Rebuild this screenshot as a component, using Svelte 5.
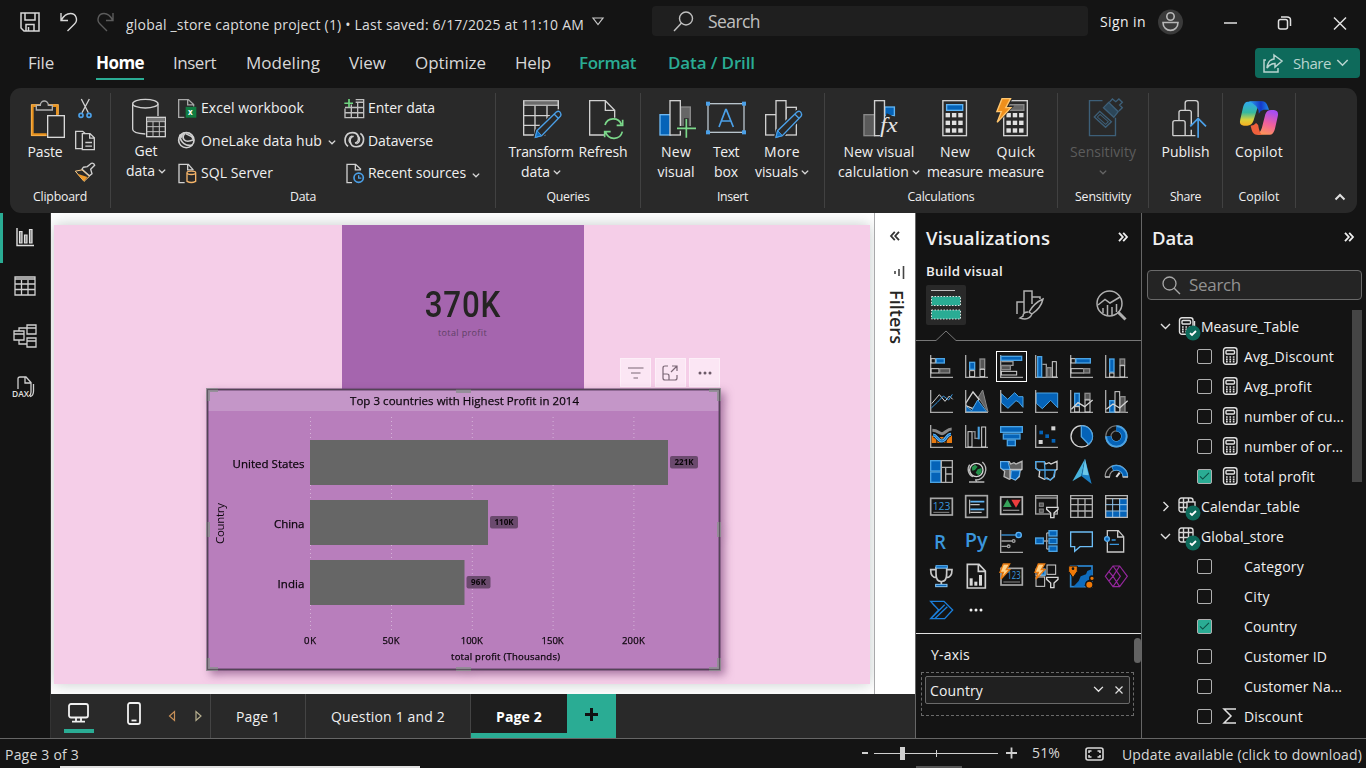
<script>
  // Letter-spaces a label so that it takes exactly the given width.
  function fit(node, width) {
    const n = node.textContent.length;
    node.style.letterSpacing = '0px';
    const natural = node.getBoundingClientRect().width;
    node.style.letterSpacing = (width - natural) / n + 'px';
  }

  const r = (x, y, w, h, f, s, sw = 4) =>
    `<rect x="${x}" y="${y}" width="${w}" height="${h}" fill="${f}" stroke="${s}" stroke-width="${sw}"/>`;
  const p = (d, s = '#d0d0d0', sw = 4, f = 'none') =>
    `<path d="${d}" stroke="${s}" stroke-width="${sw}" fill="${f}"/>`;
  const c = (x, y, rad, f, s = 'none', sw = 4) =>
    `<circle cx="${x}" cy="${y}" r="${rad}" fill="${f}" stroke="${s}" stroke-width="${sw}"/>`;
  const B = (x, y, w, h) => r(x, y, w, h, '#0563b8', '#4ba3e3');
  const G = (x, y, w, h) => r(x, y, w, h, '#555', '#8a8a8a');
  const W = (x, y, w, h) => r(x, y, w, h, 'none', '#d4d4d4', 3);
  const axis = p('M2 0V67H69', '#a8a8a8');
  const bolt = 'M10 -3H29L19 14H29L3 42L10 22H0Z';
  const txt = (x, y, size, t, len, fill = '#3a96dd', weight = 400) =>
    `<text x="${x}" y="${y}" font-family="Open Sans, sans-serif" font-weight="${weight}" font-size="${size}" textLength="${len}" lengthAdjust="spacingAndGlyphs" fill="${fill}">${t}</text>`;
  const funnel = p('M35 37H69V43L57 54V68H47V54L35 43Z', '#d8d8d8', 4, '#141414');
  const boltIcon = p(bolt, '#e87a10', 4, '#ffd28a');
  const map = 'M2 5H28L32 12L42 8L48 12L66 4V28L60 32L58 50L46 60L36 54L28 58L12 50L14 34L2 24Z';

  const visuals = [
    axis + W(3, 11, 13, 13) + B(19, 11, 24, 13) + W(3, 41, 24, 13) + G(29, 41, 30, 13),
    axis + B(14, 22, 15, 21) + W(14, 47, 15, 18) + G(45, 12, 14, 29) + W(45, 43, 14, 22),
    axis + B(3, 4, 62, 12) + p('M4 20H39V31H4', '#9a9a9a') + G(4, 32, 27, 12) + W(4, 49, 46, 11),
    axis + B(8, 5, 12, 61) + p('M22 28H34V66', '#9a9a9a') + G(36, 38, 12, 28) + W(52, 20, 12, 46),
    axis + W(3, 11, 13, 13) + B(18, 11, 43, 13) + W(3, 41, 38, 13) + G(41, 41, 18, 13),
    axis + B(14, 12, 13, 39) + W(14, 54, 13, 12) + G(45, 12, 14, 18) + W(45, 32, 14, 34),

    axis + p('M5 41L28 14L45 34L58 18L68 28', '#d4d4d4', 3) + p('M4 54L22 37L40 18L56 30L67 13', '#3a96dd', 3),
    p('M40 22L53 0L69 66Z', '#888', 3, '#606060') + p('M2 40L24 6L42 28L24 56L2 47Z', '#d4d4d4') + p('M2 48L20 62L38 30L65 65H2Z', '#4ba3e3', 3, '#0563b8') + axis,
    p('M4 11L23 28L44 8L56 20H69V52L56 36L48 32L24 55L4 38Z', '#4ba3e3', 3, '#0563b8') + axis,
    p('M4 9H68V53L47 31L22 56L4 40Z', '#4ba3e3', 3, '#0563b8') + axis,
    axis + B(14, 10, 14, 38) + W(14, 50, 14, 16) + G(45, 10, 15, 18) + W(45, 30, 15, 36) + p('M4 58L24 38L44 50L68 30', '#d4d4d4'),
    axis + B(14, 32, 14, 34) + W(30, 5, 14, 61) + G(46, 20, 14, 46) + p('M4 58L24 42L44 54L68 32', '#d4d4d4'),

    axis + r(5, 32, 14, 22, '#e87a10', '#e87a10', 0) + r(50, 32, 16, 22, '#e87a10', '#e87a10', 0) + r(24, 38, 20, 14, '#ffd28a', '#e87a10') + p('M7 16C24 16 28 26 36 26S52 12 65 12', '#888', 9) + p('M9 30C20 30 24 48 36 48S48 28 63 28', '#111', 13) + p('M9 30C20 30 24 48 36 48S48 28 63 28', '#5fb4f4', 9) + p('M9 30C20 30 24 48 36 48S48 28 63 28', '#0563b8', 3),
    axis + W(9, 20, 12, 46) + p('M21 20H30V40H40', '#8a8a8a') + r(39, 6, 4, 36, '#4ba3e3', '#4ba3e3', 2) + W(50, 6, 12, 60),
    B(2, 5, 65, 17) + B(10, 27, 50, 15) + B(22, 45, 24, 17),
    axis + r(13, 17, 11, 11, '#0563b8', 'none', 0) + r(31, 28, 11, 11, '#0563b8', 'none', 0) + r(50, 42, 11, 11, '#0563b8', 'none', 0) + r(49, 4, 12, 12, '#d4d4d4', 'none', 0) + r(11, 45, 12, 12, '#d4d4d4', 'none', 0),
    c(35, 34, 32, 'none', '#d4d4d4') + p('M34 3A31 31 0 0 1 56 58L34 35Z', '#4ba3e3', 4, '#0563b8'),
    c(34, 34, 24, 'none', '#777', 19) + c(34, 34, 24, 'none', '#141414', 12) + p('M34 10A24 24 0 1 1 10 34', '#4ba3e3', 19) + p('M34 12A22 22 0 1 1 12 34', '#0563b8', 12),

    B(2, 2, 31, 31) + B(2, 36, 31, 31) + p('M34 2H67V67H34ZM34 22H67M47 22V67M47 42H67', '#b0b0b0'),
    c(34, 30, 20, '#141414', '#d4d4d4') + p('M20 22L30 14L38 20L30 30L22 32ZM38 28L50 24L50 38L40 46L32 38Z', 'none', 0, '#23914a') + p('M52 6A31 31 0 0 1 30 60M34 60V66M12 66H58M14 14A24 24 0 0 0 24 50', '#b8b8b8'),
    p(map, '#b8b8b8', 4, '#606060') + p('M2 5H24L30 28H8L2 22Z', '#5fb4f4', 3, '#0563b8') + p('M34 32H60L57 48L46 60L32 54Z', '#5fb4f4', 3, '#0563b8') + p('M30 28H66M30 28V56', '#d4d4d4', 3),
    p(map, '#d4d4d4', 4) + p('M2 5H28L30 30H10L2 24ZM30 30H60L56 50L46 60L30 54Z', '#4ba3e3', 4),
    p('M45 -4L7 64L34 48Z', 'none', 0, '#48b3dc') + p('M45 -4L65 72L34 48Z', 'none', 0, '#1b7fc4') + p('M45 -4L56 46L38 44Z', 'none', 0, '#6cc8ea'),
    p('M7 50A27 27 0 0 1 61 50', '#999', 17) + p('M7 50A27 27 0 0 1 61 50', '#141414', 10) + p('M22 26A27 27 0 0 1 61 50', '#4ba3e3', 17) + p('M24 26A27 27 0 0 1 61 50', '#0563b8', 11) + p('M0 51H15M53 51H69', '#c8c8c8') + p('M34 51L44 38', '#e0e0e0', 6),

    r(2, 10, 65, 50, 'none', '#a8a8a8', 5) + txt(8, 44, 32, '123', 53) + p('M10 52H58', '#888', 3),
    r(2, 2, 65, 65, 'none', '#a8a8a8', 5) + p('M14 14V56', '#d4d4d4', 3) + p('M16 20H58M16 43H58', '#5fb4f4', 5) + p('M16 29H44M16 52H50', '#c0c0c0', 4),
    r(2, 6, 65, 52, 'none', '#b8b8b8', 5) + p('M9 36L22 13L35 36Z', 'none', 0, '#37a35a') + p('M34 14H62L48 38Z', 'none', 0, '#ee3d3d') + p('M9 46H58', '#888', 4),
    r(2, 2, 65, 55, 'none', '#a8a8a8', 4) + p('M2 9H67', '#a8a8a8', 4) + r(13, 24, 12, 10, '#555', '#888', 3) + r(13, 42, 12, 10, '#555', '#888', 3) + funnel,
    p('M2 2H67V67H2ZM2 11H67M2 29H67M2 48H67M24 11V67M45 11V67', '#b0b0b0', 4),
    r(2, 11, 65, 56, '#0563b8', 'none', 0) + r(2, 11, 40, 38, '#141414', 'none', 0) + p('M2 2H67V67H2ZM2 11H67', '#b8b8b8') + p('M2 29H67M2 48H67M23 11V67M44 11V67', '#8fc4ee', 3),

    txt(12, 56, 60, 'R', 36, '#3a96dd', 600),
    txt(-1, 52, 60, 'Py', 69, '#3a96dd', 600),
    p('M2 0V67H69', '#a8a8a8') + p('M4 15H48', '#3a96dd') + c(56, 15, 8, '#0563b8', '#5fb4f4') + p('M4 33H36M4 49H22', '#a0a0a0') + c(41, 33, 4, 'none', '#a0a0a0') + c(26, 49, 4, 'none', '#a0a0a0'),
    p('M24 33H40M35 9V57M35 9H42M35 57H42', '#a0a0a0', 4) + B(2, 24, 23, 17) + B(42, 2, 24, 16) + B(42, 25, 24, 16) + B(42, 48, 24, 16),
    p('M2 6H67V50H30L14 64V50H2Z', '#6cbcf4', 4),
    p('M7 18V2H40L56 20V66H7V36M38 2V21H56', '#c8c8c8') + c(6, 27, 7, '#0563b8', '#5fb4f4') + p('M20 30H32M14 43H42', '#3a96dd'),

    p('M18 8H50V25C50 48 42 48 34 50C26 48 18 48 18 25ZM18 14H2C2 30 8 38 20 38M50 14H66C66 30 60 38 48 38M34 50V58', '#c8c8c8', 5) + r(18, 2, 34, 7, '#0563b8', '#5fb4f4', 3) + r(17, 58, 34, 7, '#0563b8', '#8cc8f4', 3),
    p('M7 -2H42L61 18V69H7ZM40 0V19H60', '#d0d0d0', 5) + r(14, 40, 9, 22, '#d8d8d8', 'none', 0) + r(28, 50, 9, 12, '#d8d8d8', 'none', 0) + r(42, 30, 9, 32, '#d8d8d8', 'none', 0),
    r(3, 10, 64, 50, 'none', '#a8a8a8', 5) + txt(22, 43, 30, '123', 40) + p('M10 51H60', '#888', 3) + boltIcon,
    W(3, 12, 27, 20) + W(36, 0, 26, 28) + W(3, 36, 26, 28) + r(20, 14, 10, 16, '#0563b8', '#4ba3e3') + funnel + boltIcon,
    r(2, 3, 64, 62, '#141414', '#2b86d1', 5) + p('M66 12L52 18L48 28L32 34L26 48L10 65H42L48 50L66 38Z', 'none', 0, '#0f6cbd') + p('M-4 3H22V19L9 38L-4 19Z', '#141414', 3, '#f07a08') + c(9, 11, 4, '#141414') + c(58, 59, 11, '#f07a08', '#141414') + c(66, 40, 7, '#f07a08', '#141414'),
    p('M24 3H44L67 34L44 65H24L1 34ZM24 3L46 34L24 65M44 3L24 34L44 65M12 20L24 34L12 48', '#94279c', 3.5),
    p('M2 4H42L68 30L44 56H2L26 30Z M2 56L44 14M14 56L52 20M2 4L14 18', '#1b7fdb', 4),
  ];

  // name: [view box x, y, width, height, rendered width, rendered height, body]
  const pencil = (x, y) =>
    p(`M${x} ${y}L${x + 5} ${y - 20}L${x + 63} ${y - 76}Q${x + 72} ${y - 82} ${x + 76} ${y - 72}Q${x + 79} ${y - 66} ${x + 73} ${y - 61}L${x + 19} ${y - 5}Z`, '#292929', 12) +
    p(`M${x} ${y}L${x + 5} ${y - 20}L${x + 63} ${y - 76}Q${x + 72} ${y - 82} ${x + 76} ${y - 72}Q${x + 79} ${y - 66} ${x + 73} ${y - 61}L${x + 19} ${y - 5}Z`, '#4ba0e8', 4, '#292929') +
    p(`M${x} ${y}L${x + 5} ${y - 20}L${x + 19} ${y - 5}Z`, '#4ba0e8', 3, '#0f6cbd') + p(`M${x + 56} ${y - 70}L${x + 69} ${y - 57}`, '#4ba0e8', 4);
  const dots = (x, y, dx, dy, s) =>
    [0, 1, 2].flatMap((i) => [0, 1, 2].map((j) => r(x + j * dx, y + i * dy, s, s, '#e0e0e0', 'none', 0))).join('');
  const z1 = (x, body) => [x, 291, 120, 126, 40, 42, body];
  const z2 = (x, body) => [x, 36, 120, 126, 40, 42, body];
  const z4 = (x, body) => [x, 36, 117, 126, 40, 42, body];
  const icons = {
    paste: z1(75, p('M140 404H97V317H172V345', '#e8921e', 8) + p('M140 407H94V314H175V343', '#ffc26a', 2) + p('M109 330V316H121C121 307 128 303 133 303S145 307 145 316H157V330Z', '#b0b0b0', 4, '#292929') + r(143, 347, 50, 65, '#292929', '#d8d8d8', 4)),
    get: z1(378, p('M436 402C410 401 398 396 398 388V311M474 311V348') + `<ellipse cx="436" cy="311" rx="38" ry="13" stroke="#d0d0d0" stroke-width="4" fill="#292929"/>` + r(440, 352, 56, 58, '#292929', '#d0d0d0') + r(442, 354, 52, 9, '#777', 'none', 0) + p('M440 365H496M440 380H496M440 395H496M459 365V410M478 365V410', '#c0c0c0', 3)),
    transform: z2(213, r(221, 47, 104, 14, '#6a6a6a', '#b0b0b0') + p('M286 150H221V47M325 47V75M221 92H308M221 121H270M255 62V150M291 62V108') + pencil(256, 157)),
    refresh: z2(399, p('M462 150H419V47H466L494 76V98M466 47V76H494') + p('M465 120A26 26 0 0 1 514 118M518 104V121H500M517 140A26 26 0 0 1 467 142M464 157V140H482', '#7bd88a', 5)),
    newvisual: z2(618, r(630, 89, 32, 61, '#0563b8', '#6cb8f4') + r(692, 66, 29, 60, '#666', '#888') + r(660, 47, 31, 103, '#292929', '#d0d0d0') + p('M709 100V160M680 130H740', '#292929', 14) + p('M709 102V158M681 130H738', '#7bd88a', 5)),
    textbox: z2(768, r(774, 56, 108, 86, 'none', '#b8c4cc') + [[768, 50], [876, 50], [768, 136], [876, 136]].map(([x, y]) => r(x, y, 12, 12, '#4ba0e8', 'none', 0)).join('') + p('M807 126L827 74H829L850 126M813 108H843', '#4ba0e8', 5)),
    more: z2(936, r(947, 89, 32, 61, '#292929', '#d0d0d0') + r(1008, 67, 31, 83, '#292929', '#d0d0d0') + r(978, 47, 30, 103, '#292929', '#d0d0d0') + pencil(978, 157)),
    calc: z4(84.5, r(99, 89, 31, 63, '#5a5a5a', '#888') + r(160, 66, 28, 26, '#0563b8', '#5fb4f4') + r(130, 47, 29, 105, '#292929', '#d0d0d0') + p('M150 152L168 90L200 105V150Z', '#292929', 8, '#292929') + `<text x="146" y="142" font-family="Liberation Serif, serif" font-style="italic" font-size="62" textLength="52" lengthAdjust="spacingAndGlyphs" fill="#e4e4e4">fx</text>`),
    measure: z4(307, r(330, 47, 69, 105, 'none', '#d0d0d0') + r(341, 59, 47, 17, '#0563b8', '#5fb4f4') + dots(338, 84, 18.5, 23, 13)),
    quick: z4(485.5, r(508, 47, 69, 105, 'none', '#d0d0d0') + r(524, 59, 43, 17, '#666', '#888') + dots(516, 84, 18.5, 23, 13) + p('M503 40H530L517 66H530L489 112L501 80H488Z', '#292929', 8) + p('M503 41H528L514 68H529L489 112L501 80H488Z', '#ffc66e', 4, '#ee8f1c')),
    sensitivity: z4(740, p('M797 47H759V152H835V98', '#3d5f78') + p('M773 96L789 79L823 110L806 127Z', '#3d5f78') + p('M782 96L790 88L814 110L806 118Z', '#3d5f78', 3) + p('M800 68L830 97L843 80L815 52Z', '#3d5f78', 4, '#2c4658') + p('M817 52L826 42L836 50L845 42L855 52L847 60L855 68L845 78', '#3d5f78', 4)),
    publish: z4(980, p('M1000 152V113Q1000 107 1006 107H1018V82Q1018 76 1024 76H1036V55Q1036 47 1044 47H1066Q1074 47 1074 55V96M1018 107H1030Q1036 107 1036 113V152M1036 76H1048Q1054 76 1054 82V120M1000 152H1066M1054 134V152') + p('M1074 158V102M1051 124L1074 100L1097 124', '#4ba0e8', 5)),
    copilot: z4(1196, `<defs><linearGradient id="ca" x1="0" y1="0" x2="0" y2="1"><stop offset="0" stop-color="#2fa8f0"/><stop offset=".45" stop-color="#36b8a0"/><stop offset=".75" stop-color="#d8d03c"/><stop offset="1" stop-color="#f8b020"/></linearGradient><linearGradient id="cb" x1="0.5" y1="0" x2="0.2" y2="1"><stop offset="0" stop-color="#a64df0"/><stop offset=".5" stop-color="#f0609c"/><stop offset="1" stop-color="#ff9a52"/></linearGradient><linearGradient id="cc" x1="0" x2="1"><stop offset="0" stop-color="#2ea8f4"/><stop offset=".6" stop-color="#1438c8"/><stop offset="1" stop-color="#2088e8"/></linearGradient></defs><path d="M1222 50H1264Q1254 55 1249 72L1238 108Q1233 122 1220 122H1210Q1195 121 1200 102L1208 66Q1212 50 1222 50Z" fill="url(#ca)"/><path d="M1224 49H1266Q1276 50 1280 64L1284 74H1268Q1258 76 1254 86Q1254 60 1224 49Z" fill="url(#cc)"/><path d="M1288 149H1248Q1258 144 1263 128L1273 88Q1277 75 1290 75H1298Q1314 77 1309 96L1301 132Q1297 148 1288 149Z" fill="url(#cb)"/><path d="M1285 149H1246Q1237 148 1233 134L1230 122Q1240 122 1246 114L1252 120Q1256 146 1264 149Z" fill="#f0603c"/>`),
    cut: [225, 293, 60, 64, 20, 21, p('M244 296L265 338M268 296L246 338') + c(243, 346, 6, 'none', '#4ba0e8', 5) + c(267, 346, 6, 'none', '#4ba0e8', 5)],
    copy: [225, 388, 60, 64, 20, 21, p('M246 445H227V392H248L255 398') + p('M247 399H270L283 412V448H247ZM269 399V413H283M256 426H276M256 437H276')],
    brush: [225, 486, 60, 64, 20, 21, p('M250 502L262 500L274 490Q282 488 284 496L272 508L276 522L268 528L246 508Z', '#d0d0d0', 4) + p('M226 514L246 510L268 530L252 545Z', '#ffd08a', 3, '#292929') + p('M232 522L262 532L252 545Z', 'none', 0, '#f09a28')],
    excel: [530, 292, 60, 64, 20, 21, p('M552 351H535V297H564L580 312V318M562 297V313H580', '#a8a8a8') + r(556, 319, 32, 33, '#107c41', 'none', 0) + `<text x="563" y="345" font-family="Open Sans, sans-serif" font-weight="700" font-size="24" fill="#fff">x</text>`],
    onelake: [530, 390, 60, 64, 20, 21, c(558, 421, 23, 'none', '#d0d0d0', 5) + p('M554 400C542 414 550 432 580 420M538 408C542 430 556 440 576 436M556 401L574 410L580 420', '#d0d0d0', 5) + p('M536 406L550 398L544 414Z', '#d0d0d0', 2, '#d0d0d0')],
    sql: [530, 487, 60, 64, 20, 21, p('M553 547H536V491H564L578 507M562 491V508H580') + `<path d="M560 518V543Q573 550 586 543V518" stroke="#f5b469" stroke-width="4" fill="#292929"/><ellipse cx="573" cy="517" rx="13" ry="5" stroke="#f5b469" stroke-width="4" fill="#292929"/>`],
    enter: [1031, 292, 60, 64, 20, 21, p('M1066 297H1090V352H1034V324M1066 305H1090M1034 321H1090M1034 337H1090M1053 312V352M1072 306V352', '#c0c0c0') + p('M1046 295V320M1032 308H1058', '#6fd680', 5)],
    dataverse: [1031, 390, 60, 64, 20, 21, p('M1043 440C1028 428 1032 398 1056 398C1078 398 1080 426 1064 430M1080 400C1096 412 1092 441 1068 441C1046 441 1044 412 1060 409', '#d0d0d0', 5) + p('M1052 431C1042 424 1046 410 1056 408M1072 408C1082 415 1078 430 1068 432', '#d0d0d0', 4)],
    recent: [1031, 487, 60, 64, 20, 21, p('M1055 547H1040V491H1066L1082 507M1065 491V508H1082') + c(1075, 532, 14, '#292929', '#4ba0e8', 5) + p('M1075 524V533H1083', '#4ba0e8')],
  };

  const groups = [
    { label: 'Queries', lw: 43, w: 145, pad: 8, buttons: [
      { icon: 'transform', w: 74, l: [['Transform', 65], ['data', 29]], more: true },
      { icon: 'refresh', w: 50, l: [['Refresh', 49]] }] },
    { label: 'Insert', lw: 31, w: 184, pad: 9, buttons: [
      { icon: 'newvisual', w: 52, l: [['New', 30], ['visual', 37]] },
      { icon: 'textbox', w: 48, l: [['Text', 26], ['box', 24]] },
      { icon: 'more', w: 64, l: [['More', 36], ['visuals', 43]], more: true }] },
    { label: 'Calculations', lw: 67, w: 233, pad: 13, buttons: [
      { icon: 'calc', w: 82, l: [['New visual', 71], ['calculation', 71]], more: true },
      { icon: 'measure', w: 70, l: [['New', 30], ['measure', 56]] },
      { icon: 'quick', w: 52, l: [['Quick', 39], ['measure', 56]] }] },
    { label: 'Sensitivity', lw: 56, w: 91, pad: 0, buttons: [
      { icon: 'sensitivity', w: 90, l: [['Sensitivity', 66], ['', 0]], more: true, off: true }] },
    { label: 'Share', lw: 31, w: 74, pad: 0, buttons: [{ icon: 'publish', w: 73, l: [['Publish', 48]] }] },
    { label: 'Copilot', lw: 41, w: 73, pad: 0, buttons: [{ icon: 'copilot', w: 72, l: [['Copilot', 48]] }] },
  ];
  const sources = [
    [['excel', 'Excel workbook', 103], ['onelake', 'OneLake data hub', 121, true], ['sql', 'SQL Server', 72]],
    [['enter', 'Enter data', 67], ['dataverse', 'Dataverse', 65], ['recent', 'Recent sources', 98, true]],
  ];
  const menu = [['File', 26, 28], ['Home', 48, 96], ['Insert', 43, 173], ['Modeling', 74, 246], ['View', 37, 349], ['Optimize', 71, 415], ['Help', 36, 515], ['Format', 57, 579], ['Data / Drill', 87, 668]];
  const gapBefore = (i) => menu[i][2] - (i ? menu[i - 1][2] + menu[i - 1][1] : 0);

  const tree = [
    { t: 'Measure_Table', w: 98, open: true, kind: 'calcs' },
    { t: 'Avg_Discount', w: 90, leaf: true, kind: 'calc' },
    { t: 'Avg_profit', w: 68, leaf: true, kind: 'calc' },
    { t: 'number of cu...', w: 100, leaf: true, kind: 'calc' },
    { t: 'number of or...', w: 99, leaf: true, kind: 'calc' },
    { t: 'total profit', w: 71, leaf: true, kind: 'calc', on: true },
    { t: 'Calendar_table', w: 99, kind: 'table' },
    { t: 'Global_store', w: 83, open: true, kind: 'table' },
    { t: 'Category', w: 60, leaf: true },
    { t: 'City', w: 26, leaf: true },
    { t: 'Country', w: 53, leaf: true, on: true },
    { t: 'Customer ID', w: 83, leaf: true },
    { t: 'Customer Na...', w: 98, leaf: true },
    { t: 'Discount', w: 59, leaf: true, kind: 'sum' },
  ];
  const bars = [
    { name: 'United States', nw: 72, y: 51, w: 358, label: '221K', bw: 28 },
    { name: 'China', nw: 30.5, y: 111, w: 178, label: '110K', bw: 28 },
    { name: 'India', nw: 27, y: 171, w: 154.5, label: '96K', bw: 24 },
  ];
  const ticks = [['0K', 104, 12], ['50K', 185, 17], ['100K', 265.8, 22], ['150K', 346.6, 22], ['200K', 427.4, 23]];
</script>

{#snippet icon(name)}
  {@const i = icons[name]}
  <svg class="ic" width={i[4]} height={i[5]} viewBox="{i[0]} {i[1]} {i[2]} {i[3]}" preserveAspectRatio="none">{@html i[6]}</svg>
{/snippet}
{#snippet chev(w = 8, col = '#d8d8d8')}
  <svg class="ic" width={w} height={w * 0.6} viewBox="0 0 10 6"><path d="M1 .8L5 4.8L9 .8" fill="none" stroke={col} stroke-width={w > 8 ? 1.2 : 1.7} /></svg>
{/snippet}
{#snippet dbl(col)}
  <svg class="ic" width="10" height="10" viewBox="0 0 10 10"><path d="M1 .8L4.8 5L1 9.2M5.2 .8L9 5L5.2 9.2" fill="none" stroke={col} stroke-width="1.8" /></svg>
{/snippet}

<div class="app">
  <header class="title">
    <svg class="ic save" width="20" height="20" viewBox="0 0 20 20" fill="none" stroke="#d8d8d8" stroke-width="1.5"><path d="M1 1H19V19H4L1 16ZM5 1V8H15V1M6 19V12.500H14V19M8.500 15V19" /></svg>
    <svg class="ic undo" width="18" height="20" viewBox="0 0 18 20" fill="none" stroke="#d8d8d8" stroke-width="1.4"><path d="M1 1V8.500H8M1.500 8C4 3 7 1.500 10.500 1.500C16 1.500 18.500 8 14.500 12L7.500 19" /></svg>
    <svg class="ic redo" width="18" height="20" viewBox="0 0 18 20" fill="none" stroke="#5c5c5c" stroke-width="1.4"><path d="M16 1V8.500H9M15.500 8C13 3 10 1.500 7 1.500C1.500 1.500 -1 8 3 12L10 19" /></svg>
    <span class="doc" use:fit={458}>global _store captone project (1) • Last saved: 6/17/2025 at 11:10 AM</span>
    <svg class="ic tri" width="12" height="9" viewBox="0 0 12 9" fill="none" stroke="#c8c8c8" stroke-width="1.2"><path d="M1 1H11L6 7.500Z" /></svg>
    <div class="search">
      <svg class="ic" width="21" height="21" viewBox="0 0 21 21" fill="none" stroke="#c0c0c0" stroke-width="1.4"><circle cx="13" cy="7.500" r="6.500" /><path d="M8.500 12L1 20" /></svg>
      <span use:fit={52}>Search</span>
    </div>
    <span class="sign" use:fit={46}>Sign in</span>
    <svg class="ic" width="25" height="26" viewBox="0 0 25 26" fill="none" stroke="#b8b8b8" stroke-width="1.6"><circle cx="12.500" cy="13" r="12.500" fill="#3a3a3a" stroke="none" /><circle cx="12.500" cy="7.500" r="3.700" /><path d="M5 13.500H20C20 24 5 24 5 13.500Z" /></svg>
    <svg class="ic win" width="124" height="14" viewBox="0 0 124 14" fill="none" stroke="#e0e0e0" stroke-width="1.5"><path d="M1 7H14" /><rect x="55.500" y="3.500" width="9" height="9.500" rx="2" /><path d="M58 1H64Q67.500 1 67.500 4V10" /><path d="M111 1.500L123 13.500M123 1.500L111 13.500" /></svg>
  </header>

  <nav class="menu">
    {#each menu as m, i}
      <span class="tab" class:home={i === 1} class:ctx={i > 6} style:margin-left="{gapBefore(i)}px"><span use:fit={m[1]}>{m[0]}</span></span>
    {/each}
    <button class="share">
      <svg class="ic" width="20" height="19" viewBox="0 0 20 19" fill="none" stroke="#b8d4cf" stroke-width="1.500"><path d="M3 6H1V18H15V14M11 1L19 7L12 13V9.500C8 9.500 6 11 4 14C4.500 9 7 5.500 11 5Z" /></svg>
      <span use:fit={38}>Share</span>{@render chev(13, '#b8d4cf')}
    </button>
  </nav>

  <section class="ribbon">
    <div class="group clip">
      <div class="content">
        <div class="btn paste">{@render icon('paste')}<span class="l"><span use:fit={35}>Paste</span></span></div>
        <div class="mini">{@render icon('cut')}{@render icon('copy')}{@render icon('brush')}</div>
      </div>
      <span class="gl"><span use:fit={54}>Clipboard</span></span>
    </div>
    <div class="group data">
      <div class="content">
        <div class="btn get">{@render icon('get')}<span class="l"><span use:fit={23}>Get</span></span><span class="l"><span use:fit={29}>data</span>{@render chev()}</span></div>
        {#each sources as col, i}
          <div class="col" class:second={i === 1}>
            {#each col as s}
              <div class="src">{@render icon(s[0])}<span use:fit={s[2]}>{s[1]}</span>{#if s[3]}{@render chev()}{/if}</div>
            {/each}
          </div>
        {/each}
      </div>
      <span class="gl"><span use:fit={26}>Data</span></span>
    </div>
    {#each groups as g}
      <div class="group" style:width="{g.w}px">
        <div class="content" style:padding-left="{g.pad}px">
          {#each g.buttons as b}
            <div class="btn" class:off={b.off} style:width="{b.w}px">
              {@render icon(b.icon)}
              {#each b.l as line, i}
                <span class="l">{#if line[0]}<span use:fit={line[1]}>{line[0]}</span>{/if}{#if i === 1 && b.more}{@render chev(8, b.off ? '#666' : '#d8d8d8')}{/if}</span>
              {/each}
            </div>
          {/each}
        </div>
        <span class="gl"><span use:fit={g.lw}>{g.label}</span></span>
      </div>
    {/each}
    <svg class="ic collapse" width="12" height="8" viewBox="0 0 12 8"><path d="M1.500 6.500L6 2L10.500 6.500" fill="none" stroke="#e0e0e0" stroke-width="2" /></svg>
  </section>

  <main>
    <aside class="rail">
      <i class="mark"></i>
      <svg class="ic" width="20" height="20" viewBox="0 0 20 20" fill="none" stroke="#e0e0e0" stroke-width="1.400"><path d="M2 1V18.500H19" /><path d="M4.500 4.500H7V16H4.500ZM9.500 8H12V16H9.500ZM14.500 2.500H17V16H14.500Z" fill="#888" stroke-width="1.200" /></svg>
      <svg class="ic" width="22" height="20" viewBox="0 0 22 20" fill="none" stroke="#d0d0d0" stroke-width="1.300"><path d="M1 1H21V19H1ZM1 3H21M1 8H21M1 13.500H21M7.500 4V19M14 4V19" /></svg>
      <svg class="ic" width="24" height="24" viewBox="0 0 24 24" fill="none" stroke="#d0d0d0" stroke-width="1.300"><path d="M1 7H11V16H1ZM1 10H11M14 1H23V10H14ZM14 4H23M14 14H23V23H14ZM14 17H23M6 7V4H14M6 16V20H14" /></svg>
      <svg class="ic" width="24" height="22" viewBox="0 0 24 22" fill="none" stroke="#d0d0d0" stroke-width="1.300"><path d="M6 13V3Q6 1 8 1H14L19 6.500V16Q19 19 17 20M13 1V7H19M21.500 8V15Q21.500 20 18 20.500" /><text x="0" y="21" font-family="Open Sans" font-weight="600" font-size="8.500" textLength="17" lengthAdjust="spacingAndGlyphs" fill="#e0e0e0" stroke="none">DAX</text></svg>
    </aside>

    <div class="center">
      <div class="stage">
        <div class="page">
          <div class="card"><b use:fit={77}>370K</b><span use:fit={49}>total profit</span></div>
          <div class="tools">
            <span><svg class="ic" width="16" height="12" viewBox="0 0 16 12" stroke="#7a6675" stroke-width="1.200"><path d="M0 1H15.500M3 6H12.500M5.500 11H10" /></svg></span>
            <span><svg class="ic" width="16" height="16" viewBox="0 0 16 16" fill="none" stroke="#7a6675" stroke-width="1.200"><path d="M6 1H3Q1 1 1 3V13Q1 15 3 15H13Q15 15 15 13V10M1 9H5Q7 9 7 11V15M10 1H15V6M15 1L9 7" /></svg></span>
            <span><svg class="ic" width="14" height="4" viewBox="0 0 14 4" fill="#6c5a68"><circle cx="2" cy="2" r="1.500" /><circle cx="7" cy="2" r="1.500" /><circle cx="12" cy="2" r="1.500" /></svg></span>
          </div>
          <svg class="chart" width="515" height="283" viewBox="0 0 515 283">
            <rect x="1" y="1" width="513" height="281" fill="#b87ebc" />
            <rect x="1" y="2" width="513" height="21" fill="#c496c8" />
            <g class="grid">{#each ticks as t}<path d="M{t[1] + 0.5} 29V245" />{/each}</g>
            {#each bars as b}
              <rect x="104" y={b.y + 1} width={b.w} height="45" fill="#666" />
              <text class="cat" x="98.500" y={b.y + 29} text-anchor="end" textLength={b.nw}>{b.name}</text>
              <rect x={104 + b.w + 2} y={b.y + 17} width={b.bw} height="12.500" rx="2" fill="#6b4a6e" />
              <text class="val" x={104 + b.w + 2 + b.bw / 2} y={b.y + 26} text-anchor="middle" textLength={b.bw - 9}>{b.label}</text>
            {/each}
            {#each ticks as t}<text class="tick" x={t[1]} y="255.500" text-anchor="middle" textLength={t[2]}>{t[0]}</text>{/each}
            <text class="head" x="258.500" y="17" text-anchor="middle" textLength="229">Top 3 countries with Highest Profit in 2014</text>
            <text class="tick" x="299.500" y="272" text-anchor="middle" textLength="109">total profit (Thousands)</text>
            <text class="ylab" transform="translate(18 156) rotate(-90)" textLength="41">Country</text>
            <rect x="1.500" y="1.500" width="512" height="280" fill="none" stroke="#604266" stroke-width="2" />
            <g fill="none" stroke="#8e8e92" stroke-opacity=".85" stroke-width="4"><path d="M2 13V2H12M503 2H513V13M513 270V281H503M12 281H2V270M250 3H265M250 281H265M2 134V149M513 134V149" /></g>
            <rect x="1.500" y="1.500" width="512" height="280" fill="none" stroke="#4e4450" stroke-opacity=".7" />
          </svg>
        </div>
      </div>
      <div class="filters">
        <span class="flip">{@render dbl('#333')}</span>
        <svg class="ic" width="11" height="13" viewBox="0 0 11 13" stroke="#444" stroke-width="1.600"><path d="M1 5V8M5 3V10M9.500 0V13" /></svg>
        <svg class="ic ftxt" width="16" height="56" viewBox="0 0 16 56"><text transform="translate(2 0) rotate(90)" textLength="54" lengthAdjust="spacingAndGlyphs">Filters</text></svg>
      </div>
      <footer class="pages">
        <div class="views">
          <span class="view on"><svg class="ic" width="21" height="20" viewBox="0 0 21 20" fill="none" stroke="#f0f0f0" stroke-width="1.800"><rect x="1" y="1" width="19" height="13.500" rx="2" /><path d="M8 15V18M13 15V18M4 18.700H17" /></svg></span>
          <span class="view phone"><svg class="ic" width="14" height="23" viewBox="0 0 14 23" fill="none" stroke="#f0f0f0" stroke-width="1.800"><rect x="1" y="1" width="12" height="21" rx="2" /><path d="M4.500 18.500H9.500" /></svg></span>
          <svg class="ic arrows" width="34" height="12" viewBox="0 0 34 12" fill="none" stroke="#c89058" stroke-width="1.200"><path d="M6.500 1.500V10.500L1.500 6Z" /><path d="M28 1.500V10.500L33 6Z" stroke="#b8b090" /></svg>
        </div>
        <span class="pt p1"><span use:fit={44}>Page 1</span></span>
        <span class="pt p2"><span use:fit={114}>Question 1 and 2</span></span>
        <span class="pt p3"><span use:fit={46}>Page 2</span></span>
        <span class="add"><svg class="ic" width="13" height="13" viewBox="0 0 13 13" stroke="#111" stroke-width="3"><path d="M6.500 0V13M0 6.500H13" /></svg></span>
      </footer>
    </div>

    <aside class="viz">
      <div class="ph"><b use:fit={124}>Visualizations</b>{@render dbl('#f0f0f0')}</div>
      <b class="bv"><span use:fit={77}>Build visual</span></b>
      <div class="modes">
        <span class="mode sel"><svg class="ic" width="30" height="32" viewBox="0 0 30 32"><path d="M0 1.500H24" stroke="#c0c0c0" /><g fill="#2aac94" stroke="#e0e0e0" stroke-dasharray="1.500 1.500"><rect x=".5" y="7.500" width="29" height="9" /><rect x=".5" y="21" width="29" height="9" /></g></svg></span>
        <span class="mode"><svg class="ic" width="28" height="30" viewBox="0 0 28 30" fill="none" stroke="#b0b0b0" stroke-width="1.500"><path d="M1 24V12H8V24M8 20V1H16V14M16 7H24V9M27 9Q18 13 13 22L16 24Q25 18 27 9ZM12 22Q7 22 7 26L4 28Q13 31 16 24" /></svg></span>
        <span class="mode"><svg class="ic" width="31" height="31" viewBox="0 0 31 31" fill="none" stroke="#b0b0b0" stroke-width="1.500"><circle cx="13.500" cy="13.500" r="12.500" /><path d="M2 15L9 9.500L14 13L24 7M7 18V23M11.500 15V25M16 17V25M20.500 14V22" /><path d="M22 22L29.500 29.500" stroke-width="3" /></svg></span>
      </div>
      <svg class="ic notch" width="225" height="11" viewBox="0 0 225 11" fill="none" stroke="#777"><path d="M0 10.500H20L30 1L40 10.500H225" /></svg>
      <div class="grid6">
        {#each visuals as v, i}
          <span class="vi" class:cur={i === 2}><svg class="ic" width="23" height="23" viewBox="0 0 69 69">{@html v}</svg></span>
        {/each}
        <span class="vi"><svg class="ic" width="23" height="23" viewBox="0 0 23 23" fill="#f0f0f0"><circle cx="6" cy="10" r="1.500" /><circle cx="11" cy="10" r="1.500" /><circle cx="16" cy="10" r="1.500" /></svg></span>
      </div>
      <div class="wells">
        <i class="thumb"></i>
        <span class="wl"><span use:fit={39}>Y-axis</span></span>
        <div class="drop"><div class="field"><span use:fit={53}>Country</span>{@render chev(11, '#e8e8e8')}<svg class="ic" width="8" height="8" viewBox="0 0 8 8" stroke="#e0e0e0" stroke-width="1.200"><path d="M.5 .5L7.500 7.500M7.500 .5L.5 7.500" /></svg></div></div>
      </div>
    </aside>

    <aside class="fields">
      <div class="ph"><b use:fit={42}>Data</b>{@render dbl('#f0f0f0')}</div>
      <div class="fs">
        <svg class="ic" width="19" height="19" viewBox="0 0 19 19" fill="none" stroke="#a8a8a8" stroke-width="1.300"><circle cx="7.500" cy="7.500" r="6.500" /><path d="M12.200 12.200L18 18" /></svg>
        <span use:fit={52}>Search</span>
      </div>
      <div class="tree">
        {#each tree as n}
          <div class="row" class:leaf={n.leaf}>
            {#if n.leaf}
              <i class="cb" class:on={n.on}>{#if n.on}<svg class="ic" width="11" height="8" viewBox="0 0 12 9"><path d="M1 5L4 8L11 1" fill="none" stroke="#0c4f44" stroke-width="1.200" /></svg>{/if}</i>
            {:else}
              <svg class="ic ex" width="11" height="11" viewBox="0 0 11 11" fill="none" stroke="#e0e0e0" stroke-width="1.400"><path d={n.open ? 'M1 3L5.500 7.500L10 3' : 'M3.500 1L8 5.500L3.500 10'} /></svg>
            {/if}
            <span class="kind">
              {#if n.kind === 'calc' || n.kind === 'calcs'}
                <svg class="ic" width="18" height="18" viewBox="0 0 18 18" fill="none" stroke="#e0e0e0" stroke-width="1.400"><rect x="1.500" y=".7" width="13.500" height="16.500" rx="2.500" /><rect x="4" y="3.500" width="8.500" height="3.500" rx="1" /><path d="M4 10H12.500M4 12.300H12.500M4 14.600H12.500" stroke-width="1.700" stroke-dasharray="1.700 1.700" />{#if n.kind === 'calcs'}<path d="M16.500 4V16Q16 18 13 18" />{/if}</svg>
              {:else if n.kind === 'table'}
                <svg class="ic" width="18" height="18" viewBox="0 0 18 18" fill="none" stroke="#d8d8d8" stroke-width="1.400"><rect x="1" y="1" width="14" height="14" rx="2.500" /><path d="M1 5.500H15M1 10.500H15M5.500 1V15M10.500 1V15" />{#if !n.open}<rect x="9" y="5" width="8" height="7" fill="#141414" />{/if}</svg>
              {:else if n.kind === 'sum'}
                <svg class="ic" width="15" height="16" viewBox="0 0 15 16" fill="none" stroke="#e0e0e0" stroke-width="1.500"><path d="M14 1H2L9 8L2 15H14" /></svg>
              {/if}
              {#if !n.leaf}<svg class="ic badge" width="16" height="16" viewBox="0 0 16 16"><circle cx="8" cy="8" r="7.500" fill="#0e6a5b" /><path d="M5 8.200L7 10L11 6" fill="none" stroke="#fff" stroke-width="1.800" /></svg>{/if}
            </span>
            <span class="tx" use:fit={n.w}>{n.t}</span>
          </div>
        {/each}
        <i class="sb"></i>
      </div>
    </aside>
  </main>

  <footer class="status">
    <span class="pg" use:fit={74}>Page 3 of 3</span>
    <svg class="ic zoom" width="156" height="16" viewBox="0 0 156 16" stroke="#d0d0d0" fill="none"><path d="M1 8H7M145 8H156M150.500 2.500V13.500" stroke-width="1.800" /><path d="M13 8.500H137M75.500 5V12" stroke-width="1" /><rect x="39" y="2" width="5" height="13" fill="#d0d0d0" stroke="none" /></svg>
    <span class="pct" use:fit={28}>51%</span>
    <svg class="ic" width="19" height="14" viewBox="0 0 19 14" fill="none" stroke="#d8d8d8" stroke-width="1.600"><rect x="1" y="1" width="17" height="12" rx="2" /><path d="M4 6V4H6.500M12.500 4H15V6M15 8V10H12.500M6.500 10H4V8" /></svg>
    <span class="upd" use:fit={240}>Update available (click to download)</span>
    <i class="edge"></i><i class="edge two"></i>
  </footer>
</div>

<style>
  :global(body) { background: #141414; overflow: hidden; }
  .app { width: 1366px; height: 768px; display: flex; flex-direction: column; background: #141414; color: #f0f0f0; font-family: "Open Sans", "Noto Sans", sans-serif; font-size: 14px; line-height: 20px; overflow: hidden; }
  .app *, .app { box-sizing: border-box; }
  span { white-space: nowrap; flex: none; }
  .ic { display: block; flex: none; overflow: visible; }
  .title { height: 44px; display: flex; align-items: center; }
  .save { margin: -1px 0 0 20px; }
  .undo { margin-left: 20px; margin-top: -1px; }
  .redo { margin-left: 19px; margin-top: -1px; }
  .doc { margin-left: 11px; font-size: 14px; padding-top: 5px; color: #dcdcdc; }
  .tri { margin-left: 8px; margin-top: -2px; }
  .search { width: 436px; height: 30px; margin: -2px 0 0 48px; background: #1f1f1f; border-radius: 4px; display: flex; align-items: center; padding-left: 21px; gap: 14px; font-size: 17.500px; color: #c0c0c0; }
  .sign { margin: 0 12px; font-size: 14px; }
  .win { margin-left: 40px; margin-top: 1px; }
  .menu { height: 44px; display: flex; align-items: center; font-size: 17px; padding-bottom: 6px; color: #d8d8d8; }
  .tab { display: flex; height: 34px; align-items: center; border-bottom: 2px solid transparent; padding-top: 1px; }
  .tab.home { color: #fff; font-weight: 700; border-color: #2aac94; }
  .tab.ctx { color: #2aac94; font-weight: 600; }
  .share { margin-left: auto; margin-right: 6px; width: 105px; height: 30px; border: 0; border-radius: 4px; background: #0e6a5b; color: #b8d4cf; font: inherit; font-size: 15px; display: flex; align-items: center; padding: 0 0 0 8px; gap: 5px; }
  .share span { margin-left: 5px; }
  .ribbon { height: 125px; margin: 0 9px 0 10px; border-radius: 11px; background: #292929; display: flex; padding-top: 5px; flex: none; }
  .group { height: 115px; border-right: 1px solid #414141; display: flex; flex-direction: column; flex: none; }
  .clip { width: 101px; }
  .data { width: 385px; }
  .content { height: 95px; display: flex; padding-top: 4px; }
  .gl { align-self: center; font-size: 12.300px; line-height: 18px; }
  .btn { display: flex; flex-direction: column; align-items: center; flex: none; }
  .btn > .l:nth-of-type(1) { margin-top: 3px; }
  .off { color: #5c5c5c; }
  .l { display: flex; align-items: center; gap: 3px; height: 20px; }
  .paste { width: 50px; margin-left: 10px; }
  .get { width: 66px; margin-left: 2px; }
  .get > .l:nth-of-type(1) { margin-top: 2px; }
  .mini { display: flex; flex-direction: column; gap: 11px; padding-top: 1px; margin-left: 5px; }
  .col { display: flex; flex-direction: column; gap: 12px; margin-left: -2px; width: 166px; padding-top: 1px; flex: none; }
  .col.second { margin-left: 1px; }
  .src { display: flex; align-items: center; height: 20.600px; gap: 4px; }
  .src .ic:last-child:not(:first-child) { margin-left: 2px; margin-top: 3px; }
  .collapse { margin: 100px 0 0 38px; }
  main { display: flex; height: 525px; flex: none; }
  .rail { width: 51px; border-right: 1px solid #333; position: relative; display: flex; flex-direction: column; align-items: center; padding-top: 14px; }
  .rail .ic:nth-of-type(2) { margin-top: 29px; }
  .rail .ic:nth-of-type(3) { margin-top: 28px; }
  .rail .ic:nth-of-type(4) { margin-top: 28px; margin-left: -2px; }
  .mark { position: absolute; left: 0; top: 0; width: 3px; height: 50px; background: #2aac94; }
  .center { width: 864px; display: grid; grid-template-columns: 823px 41px; grid-template-rows: 481px 44px; }
  .stage { background: #fff; padding: 12px 5px 10px 3px; overflow: hidden; }
  .page { width: 816px; height: 459px; background: #f5cee8; box-shadow: 0 0 14px rgba(60, 80, 80, .3); position: relative; }
  .card { width: 242px; height: 164px; margin-left: 287.500px; background: #a565ae; display: flex; flex-direction: column; align-items: center; }
  .card b { font: 500 36px/40px Roboto, sans-serif; color: #252423; margin-top: 60px; transform: scaleX(.87); }
  .card span { font-size: 9px; line-height: 12px; color: #5f4166; margin-top: 2px; }
  .tools { position: absolute; left: 566px; top: 133px; display: flex; gap: 3.500px; }
  .tools span { width: 31px; height: 29px; background: #fbe6f4; border: 1px solid #fdeff8; display: flex; align-items: center; justify-content: center; }
  .chart { position: absolute; left: 151.500px; top: 163px; filter: drop-shadow(4px 4px 4px rgba(90, 30, 90, .5)); font-family: "Open Sans", sans-serif; overflow: visible; }
  .grid path { stroke: #d5b3d8; stroke-width: 1; stroke-dasharray: 1 3; }
  .cat, .head, .tick { fill: #0c060c; stroke: #0c060c; stroke-width: .25px; }
  .cat, .head { font-size: 11.500px; }
  .val { font-size: 8px; font-weight: 700; fill: #0a0509; }
  .tick { font-size: 9.500px; }
  .ylab { font-size: 11.500px; fill: #0c060c; }
  .filters { background: #fff; border-left: 1px solid #a9a9ab; display: flex; flex-direction: column; align-items: center; padding-top: 18px; }
  .flip { transform: scaleX(-1); }
  .filters > .ic:nth-of-type(1) { margin: 25px 0 0 8px; }
  .filters > .ftxt { margin-top: 11px; font: 600 18px "Open Sans", sans-serif; fill: #252423; margin-left: 1px; }
  .pages { grid-column: 1 / 3; background: #292929; display: flex; }
  .views { width: 160px; border-right: 1px solid #444; display: flex; }
  .view { width: 30px; height: 39px; margin-left: 13px; display: flex; justify-content: center; padding: 9px 1px 0 0; }
  .view.on { border-bottom: 4px solid #2aac94; }
  .view.phone { margin-left: 25px; padding-top: 8px; }
  .arrows { margin: 16px 0 0 19px; }
  .pt { display: flex; justify-content: center; align-items: center; border-right: 1px solid #444; padding-top: 2px; }
  .p1 { width: 95px; }
  .p2 { width: 165px; }
  .p3 { width: 96px; background: #1e1e1e; font-weight: 700; color: #fff; border-right: 0; border-bottom: 5px solid #2aac94; padding-top: 7px; }
  .add { width: 49px; background: #2aac94; display: flex; justify-content: center; padding-top: 14px; }
  .viz { width: 227px; border-left: 1px solid #666; border-right: 1px solid #666; display: flex; flex-direction: column; }
  .ph { display: flex; align-items: center; justify-content: space-between; padding: 0 13px 0 10px; height: 48px; font-size: 18.500px; }
  .ph b { font-weight: 600; padding-top: 2px; }
  .bv { padding-left: 10px; font-size: 13.300px; line-height: 20px; font-weight: 600; }
  .modes { display: flex; padding: 4px 0 0 10px; }
  .mode { width: 40px; height: 40px; display: flex; align-items: center; justify-content: center; border-radius: 2px; flex: none; }
  .mode:nth-child(2) { margin: 0 41px 0 44px; }
  .sel { background: #292929; }
  .notch { margin-top: 5px; }
  .grid6 { display: grid; grid-template-columns: repeat(6, 35px); grid-auto-rows: 35px; padding: 7px 0 0 8px; height: 291.500px; }
  .vi { width: 35px; height: 35px; display: flex; align-items: center; justify-content: center; margin-top: .5px; }
  .cur .ic { outline: 1px solid #fff; outline-offset: 3px; }
  .wells { flex: 1; border-top: 1px solid #e0e0e0; position: relative; display: flex; flex-direction: column; }
  .thumb { position: absolute; right: 0; top: 4px; width: 7px; height: 25px; border-radius: 4px; background: #626262; }
  .wl { padding: 11px 0 0 15px; font-size: 14px; }
  .drop { margin: 7px 0 0 5px; width: 213px; height: 44px; border: 1px dashed #6a6a6a; padding: 3px; }
  .field { height: 28px; border: 1px solid #6a6a6a; border-radius: 2px; background: #202020; display: flex; align-items: center; padding: 0 6px 0 4px; }
  .field span { padding-top: 2px; }
  .field > .ic:nth-of-type(1) { margin-left: auto; margin-right: 11px; }
  .fields { width: 224px; }
  .fields .ph { padding: 0 12px 0 10px; }
  .fs { margin: 9px 0 0 5px; width: 215px; height: 30px; border: 1px solid #6a6a6a; border-radius: 4px; background: #242424; display: flex; align-items: center; gap: 8px; padding-left: 14px; font-size: 17px; color: #929292; }
  .tree { position: relative; padding-top: 11px; }
  .row { height: 30px; display: flex; align-items: center; padding-left: 18px; }
  .leaf { padding-left: 55px; }
  .ex { margin-right: 7px; }
  .kind { width: 23px; position: relative; }
  .leaf .kind { width: 23px; margin-left: 9px; padding-left: .5px; }
  .badge { position: absolute; left: 7px; top: 8px; }
  .tx { padding-top: 2px; }
  .cb { width: 15px; height: 15px; border: 1px solid #b0b0b0; border-radius: 2px; display: flex; align-items: center; justify-content: center; }
  .cb.on { background: #2aac94; }
  .sb { position: absolute; right: 4px; top: 10px; width: 10px; height: 172px; background: #454545; }
  .status { height: 30px; flex: none; border-top: 1px solid #666; display: flex; align-items: center; position: relative; color: #d8d8d8; padding-top: 1px; }
  .pg { margin-left: 5px; padding-top: 2px; }
  .zoom { margin-left: 782px; margin-top: -3px; }
  .pct { margin: -3px 25px 0 15px; }
  .upd { margin: 2px 0 0 18px; }
  .edge { position: absolute; left: 60px; bottom: 0; width: 360px; height: 2px; background: #e0e0e0; }
  .edge.two { left: 916px; width: 46px; background: #555; }
</style>
